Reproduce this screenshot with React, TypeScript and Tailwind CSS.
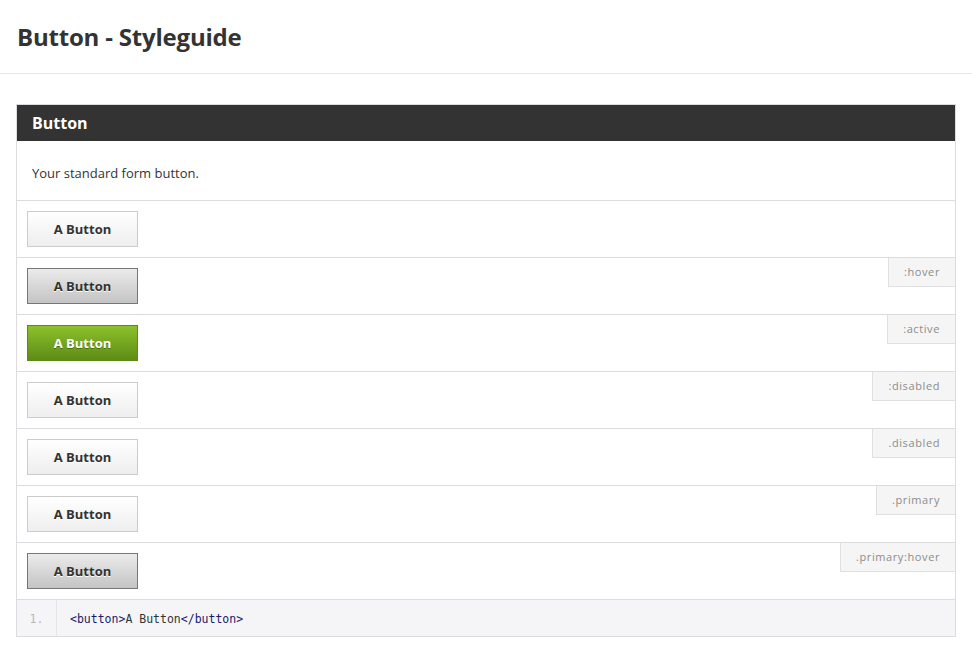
import React from "react";

type Variant = "normal" | "hover" | "active";

const rows: { variant: Variant; label?: string }[] = [
  { variant: "normal" },
  { variant: "hover", label: ":hover" },
  { variant: "active", label: ":active" },
  { variant: "normal", label: ":disabled" },
  { variant: "normal", label: ".disabled" },
  { variant: "normal", label: ".primary" },
  { variant: "hover", label: ".primary:hover" },
];

const buttonStyles: Record<Variant, string> = {
  normal:
    "border-[#cccccc] bg-gradient-to-b from-[#ffffff] to-[#eeeeee] text-[#333333] [text-shadow:0_1px_0_#fff]",
  hover:
    "border-[#777777] bg-gradient-to-b from-[#ebebeb] to-[#c4c4c4] text-[#333333] [text-shadow:0_1px_0_#fff]",
  active:
    "border-[#5b8a16] bg-gradient-to-b from-[#8cc12c] to-[#5e8c15] text-white [text-shadow:0_1px_0_#4a6e10]",
};

function DemoButton({ variant }: { variant: Variant }) {
  return (
    <button
      className={`w-[111px] h-[36px] pt-[2px] border text-[13px] font-bold ${buttonStyles[variant]}`}
    >
      A Button
    </button>
  );
}

export default function App() {
  return (
    <div className="min-h-[662px] bg-white font-['Open_Sans',sans-serif] text-[#333333]">
      {/* Page header */}
      <div className="h-[74px] border-b border-[#e8e8e8] px-[17px] pt-[20px]">
        <h1 className="text-[24px] font-bold leading-[34px] text-[#333333] tracking-[-0.2px]">
          Button - Styleguide
        </h1>
      </div>

      {/* Component card */}
      <div className="mx-[16px] mt-[30px] w-[940px] border border-[#dcdce0]">
        <div className="h-[36px] bg-[#333333] px-[15px] flex items-center">
          <h2 className="text-[16px] font-bold text-white">Button</h2>
        </div>

        <div className="h-[60px] px-[15px] pt-[6px] flex items-center border-b border-[#dcdce0]">
          <p className="text-[13px] text-[#333333]">Your standard form button.</p>
        </div>

        {rows.map((row, i) => (
          <div
            key={i}
            className="relative h-[57px] border-b border-[#dcdce0] px-[10px] pt-[10px]"
          >
            <DemoButton variant={row.variant} />
            {row.label && (
              <span className="absolute top-0 right-0 h-[29px] px-[15px] flex items-center bg-[#f5f5f5] border-l border-b border-[#e0e0e0] text-[11px] tracking-[0.6px] text-[#8c8c8c]">
                {row.label}
              </span>
            )}
          </div>
        ))}

        {/* Code sample */}
        <div className="h-[36px] pt-[3px] bg-[#f5f5f7] flex font-['DejaVu_Sans_Mono',monospace] text-[11.5px]">
          <div className="w-[40px] -mt-[3px] border-r border-[#e6e6ea] flex items-center justify-center pt-[3px] text-[#b8b8bc]">
            1.
          </div>
          <div className="flex items-center pl-[13px]">
            <span className="text-[#1a1a6e]">&lt;button&gt;</span>
            <span className="text-[#333333]">A Button</span>
            <span className="text-[#1a1a6e]">&lt;/button&gt;</span>
          </div>
        </div>
      </div>
    </div>
  );
}
